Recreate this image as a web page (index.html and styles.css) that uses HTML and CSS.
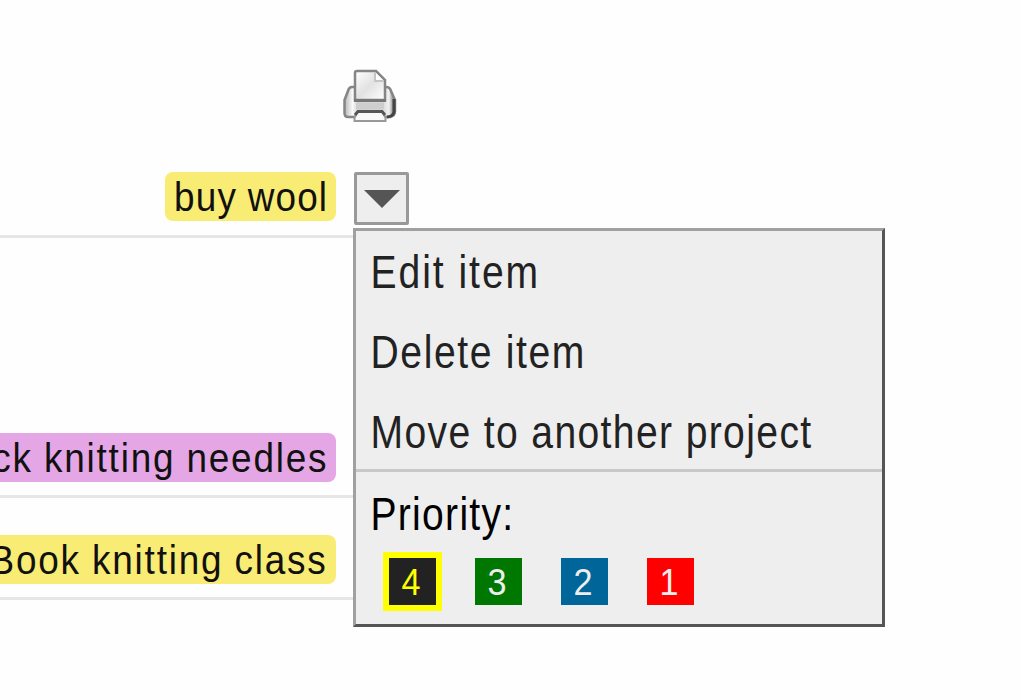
FILE: index.html
```
<!DOCTYPE html>
<html lang="en">
<head>
    <meta charset="UTF-8">
    <meta name="viewport" content="width=device-width, initial-scale=1.0">
    <title>Todo list</title>
    <link rel="stylesheet" href="styles.css">
</head>
<body>
    <div class="toolbar">
        <svg class="print-icon" viewBox="0 0 54 54" width="54" height="54">
            <defs>
                <linearGradient id="printer-body" x1="0" y1="0" x2="1" y2="0">
                    <stop offset="0" stop-color="#b5b5b5"/>
                    <stop offset="0.16" stop-color="#fafafa"/>
                    <stop offset="0.26" stop-color="#d6d6d6"/>
                    <stop offset="0.78" stop-color="#dedede"/>
                    <stop offset="0.88" stop-color="#f2f2f2"/>
                    <stop offset="1" stop-color="#606060"/>
                </linearGradient>
                <linearGradient id="printer-paper" x1="0" y1="0" x2="1" y2="1">
                    <stop offset="0" stop-color="#fff"/>
                    <stop offset="0.5" stop-color="#e2e2e2"/>
                    <stop offset="1" stop-color="#fff"/>
                </linearGradient>
            </defs>
            <path d="M12 18 H9 Q6 18 5 22 L1.500 31 V44 Q1.500 48 5 48 H47 Q52 47 52 42 V31 L48 22 Q47 18 43 18 Z" fill="url(#printer-body)" stroke="#858585" stroke-width="2.500"/>
            <path d="M51 30 V43 Q50 47.500 44 48" fill="none" stroke="#444" stroke-width="3"/>
            <path d="M12 31 V4 Q12 2 14 2 H33 L42 11 V31 Z" fill="url(#printer-paper)" stroke="#858585" stroke-width="2.500"/>
            <path d="M32 3 V12 H41" fill="#fff" stroke="#c4c4c4" stroke-width="2"/>
            <path d="M11 31.500 H43" stroke="#777" stroke-width="3"/>
            <path d="M13 37 H41" stroke="#cecece" stroke-width="7"/>
            <path d="M14 43 H40 L42.500 49 V52 H11.500 V49 Z" fill="#f8f8f8" stroke="#999" stroke-width="2"/>
            <path d="M12 46 L15 42.500 H39 L42 46" fill="none" stroke="#555" stroke-width="3"/>
        </svg>
    </div>

    <div class="list">
        <div class="item item-wool">
            <div class="cell"><span class="tag yellow"><span class="wool">buy wool</span></span></div>
            <div class="dropdown">
                <button type="button" class="dropdown-btn">
                    <svg viewBox="0 0 36 18" width="36" height="18"><path d="M0 0 H36 L18 18 Z" fill="#555"/></svg>
                </button>
                <div class="menu">
                    <ul class="actions">
                        <li class="edit">Edit item</li>
                        <li class="delete">Delete item</li>
                        <li class="move">Move to another project</li>
                    </ul>
                    <div class="priority">
                        <div class="priority-label">Priority:</div>
                        <div class="levels">
                            <span class="level p4 selected"><span class="num">4</span></span>
                            <span class="level p3"><span class="num">3</span></span>
                            <span class="level p2"><span class="num">2</span></span>
                            <span class="level p1"><span class="num">1</span></span>
                        </div>
                    </div>
                </div>
            </div>
        </div>
        <div class="item item-needles">
            <div class="cell"><span class="tag purple"><span class="needles">ck knitting needles</span></span></div>
        </div>
        <div class="item item-class">
            <div class="cell"><span class="tag yellow"><span class="class">Book knitting class</span></span></div>
        </div>
    </div>
</body>
</html>
```
FILE: styles.css
```
* {
    margin: 0;
    padding: 0;
    box-sizing: border-box;
}

body {
    width: 1020px;
    height: 700px;
    overflow: hidden;
    background: #fefefe;
    font-family: "Liberation Sans", Arial, sans-serif;
    color: #111;
}

.toolbar {
    height: 135px;
    padding: 69px 0 0 343px;
}

.print-icon {
    display: block;
}

.item {
    display: flex;
    align-items: flex-end;
    position: relative;
}

.item-wool {
    height: 103px;
}

.item-needles {
    height: 260px;
}

.item-class {
    height: 102px;
}

.cell {
    width: 354px;
    height: 66px;
    padding-right: 18px;
    border-bottom: 3px solid #e6e6e6;
    display: flex;
    justify-content: flex-end;
    align-items: flex-start;
}

.item-needles .cell,
.item-class .cell {
    height: 65px;
}

.tag {
    height: 49px;
    padding: 0 8px;
    border-radius: 8px;
    font-size: 41px;
    line-height: 50px;
    white-space: nowrap;
}

.tag span {
    display: inline-block;
    transform: scaleX(0.9);
    transform-origin: right center;
}

.yellow {
    background: #f9ec74;
}

.purple {
    background: #e4a6e4;
}

.tag .wool {
    letter-spacing: 1.3px;
    word-spacing: -1px;
    margin-left: -16px;
}

.tag .needles,
.tag .class {
    letter-spacing: 2px;
    word-spacing: -1px;
}

.dropdown {
    align-self: flex-end;
    height: 66px;
    position: relative;
}

.dropdown-btn {
    width: 55px;
    height: 53px;
    border: 3px solid #999;
    border-radius: 2px;
    background: #eee;
    display: flex;
    justify-content: center;
    align-items: center;
}

.menu {
    position: absolute;
    top: 56px;
    left: -1px;
    z-index: 1;
    width: 532px;
    height: 399px;
    background: #eee;
    border: 3px solid;
    border-color: #a0a0a0 #555 #555 #a0a0a0;
}

.actions {
    height: 241px;
    border-bottom: 3px solid #c8c8c8;
    list-style: none;
    font-size: 46px;
    line-height: 80px;
    white-space: nowrap;
    color: #222;
}

.actions li {
    height: 80px;
    padding: 1px 0 0 17px;
}

/* narrow letters with open spacing */
.actions li,
.priority-label {
    transform: scaleX(0.85);
    transform-origin: left center;
}

.edit {
    letter-spacing: 2.3px;
}

.delete {
    letter-spacing: 1.9px;
}

.move {
    letter-spacing: 1.6px;
}

.priority-label {
    height: 86px;
    padding: 2px 0 0 17px;
    font-size: 46px;
    line-height: 80px;
    letter-spacing: 1.5px;
    color: #000;
}

.levels {
    display: flex;
    gap: 39px;
    padding-left: 33px;
}

.level {
    width: 47px;
    height: 47px;
    color: #eee;
    font-size: 36px;
    line-height: 49px;
    text-align: center;
}

.num {
    display: inline-block;
    transform: translateX(-1px) scaleX(0.95);
}

.selected {
    outline: 6px solid #ff0;
    color: #ff0;
}

.p4 {
    background: #222;
}

.p3 {
    background: #070;
}

.p2 {
    background: #069;
}

.p1 {
    background: #f00;
}
```
